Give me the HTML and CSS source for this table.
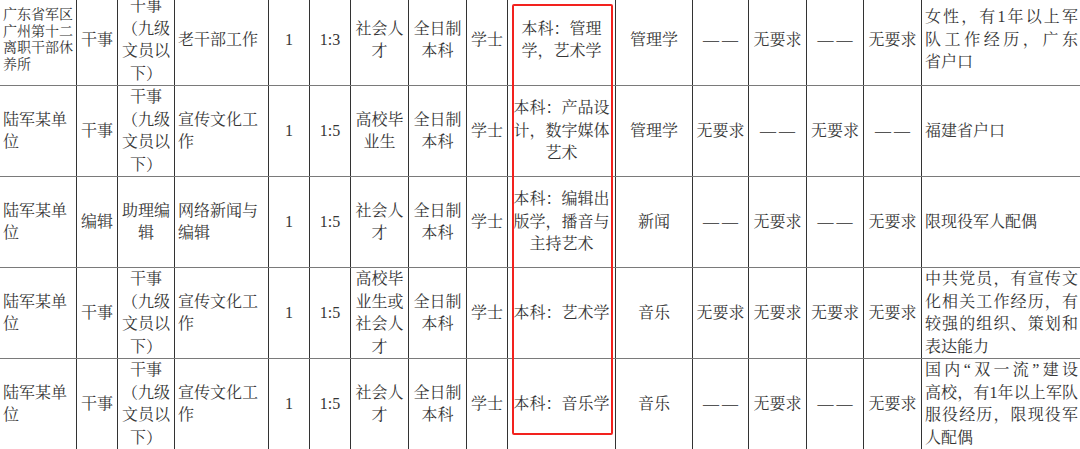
FILE: index.html
```html
<!DOCTYPE html>
<html lang="zh-CN">
<head>
<meta charset="utf-8">
<link rel="stylesheet" href="styles.css">
</head>
<body>
<div class="wrap">
<table class="grid">
<colgroup>
<col style="width:77px"><col style="width:41px"><col style="width:57px"><col style="width:94px"><col style="width:41px"><col style="width:41px"><col style="width:58px"><col style="width:58px"><col style="width:41px"><col style="width:108px"><col style="width:77px"><col style="width:56px"><col style="width:58px"><col style="width:57px"><col style="width:58px"><col style="width:160px">
</colgroup>
<tr>
<td class="l small">广东省军区广州第十二离职干部休养所</td>
<td>干事</td>
<td>干事<br>（九级<br>文员以<br>下）</td>
<td class="l">老干部工作</td>
<td>1</td>
<td>1:3</td>
<td>社会人<br>才</td>
<td>全日制<br>本科</td>
<td>学士</td>
<td>本科：管理<br>学，艺术学</td>
<td>管理学</td>
<td><span class="dash">——</span></td>
<td>无要求</td>
<td><span class="dash">——</span></td>
<td>无要求</td>
<td class="l"><span class="ln j">女性，有1年以上军</span><span class="ln j">队工作经历，广东</span><span class="ln">省户口</span></td>
</tr>
<tr>
<td class="l">陆军某单<br>位</td>
<td>干事</td>
<td>干事<br>（九级<br>文员以<br>下）</td>
<td class="l">宣传文化工<br>作</td>
<td>1</td>
<td>1:5</td>
<td>高校毕<br>业生</td>
<td>全日制<br>本科</td>
<td>学士</td>
<td>本科：产品设<br>计，数字媒体<br>艺术</td>
<td>管理学</td>
<td>无要求</td>
<td><span class="dash">——</span></td>
<td>无要求</td>
<td><span class="dash">——</span></td>
<td class="l">福建省户口</td>
</tr>
<tr>
<td class="l">陆军某单<br>位</td>
<td>编辑</td>
<td>助理编<br>辑</td>
<td class="l">网络新闻与<br>编辑</td>
<td>1</td>
<td>1:5</td>
<td>社会人<br>才</td>
<td>全日制<br>本科</td>
<td>学士</td>
<td>本科：编辑出<br>版学，播音与<br>主持艺术</td>
<td>新闻</td>
<td><span class="dash">——</span></td>
<td>无要求</td>
<td><span class="dash">——</span></td>
<td>无要求</td>
<td class="l">限现役军人配偶</td>
</tr>
<tr>
<td class="l">陆军某单<br>位</td>
<td>干事</td>
<td>干事<br>（九级<br>文员以<br>下）</td>
<td class="l">宣传文化工<br>作</td>
<td>1</td>
<td>1:5</td>
<td>高校毕<br>业生或<br>社会人<br>才</td>
<td>全日制<br>本科</td>
<td>学士</td>
<td>本科：艺术学</td>
<td>音乐</td>
<td>无要求</td>
<td>无要求</td>
<td>无要求</td>
<td>无要求</td>
<td class="l"><span class="ln j">中共党员，有宣传文</span><span class="ln j">化相关工作经历，有</span><span class="ln j">较强的组织、策划和</span><span class="ln">表达能力</span></td>
</tr>
<tr>
<td class="l">陆军某单<br>位</td>
<td>干事</td>
<td>干事<br>（九级<br>文员以<br>下）</td>
<td class="l">宣传文化工<br>作</td>
<td>1</td>
<td>1:5</td>
<td>社会人<br>才</td>
<td>全日制<br>本科</td>
<td>学士</td>
<td>本科：音乐学</td>
<td>音乐</td>
<td><span class="dash">——</span></td>
<td>无要求</td>
<td><span class="dash">——</span></td>
<td>无要求</td>
<td class="l"><span class="ln j">国内“双一流”建设</span><span class="ln j">高校，有1年以上军队</span><span class="ln j">服役经历，限现役军</span><span class="ln">人配偶</span></td>
</tr>
</table>
<div class="highlight"></div>
</div>
</body>
</html>
```
FILE: styles.css
```css
html, body {
  margin: 0;
  padding: 0;
  background: #ffffff;
  overflow: hidden;
}
.wrap {
  position: relative;
  width: 1080px;
  height: 449px;
  overflow: hidden;
}
.grid {
  border-collapse: collapse;
  table-layout: fixed;
  width: 1082px;
  margin-left: -1px;
  margin-top: -6px;
  font-family: "Liberation Serif", "Noto Serif CJK SC", "Noto Sans CJK SC", serif;
  font-size: 16px;
  line-height: 22.5px;
  color: #353535;
}
.grid tr {
  height: 91px;
}
.grid td {
  border-left: 1px solid #333333;
  border-right: 1px solid #333333;
  border-top: 1px solid #7a7a7a;
  border-bottom: 1px solid #7a7a7a;
  padding: 0 3px;
  text-align: center;
  vertical-align: middle;
  overflow: hidden;
  word-break: break-all;
}
.grid td.l {
  text-align: left;
}
.grid td.small {
  font-size: 14px;
  line-height: 16.5px;
}
.dash {
  letter-spacing: 3px;
  margin-right: -3px;
  color: #555555;
}
.ln {
  display: block;
  text-align: justify;
}
.ln.j {
  text-align-last: justify;
}
.highlight {
  position: absolute;
  left: 512px;
  top: 4px;
  width: 97px;
  height: 427px;
  border: 2px solid #f2221e;
  border-radius: 2px;
}
```
